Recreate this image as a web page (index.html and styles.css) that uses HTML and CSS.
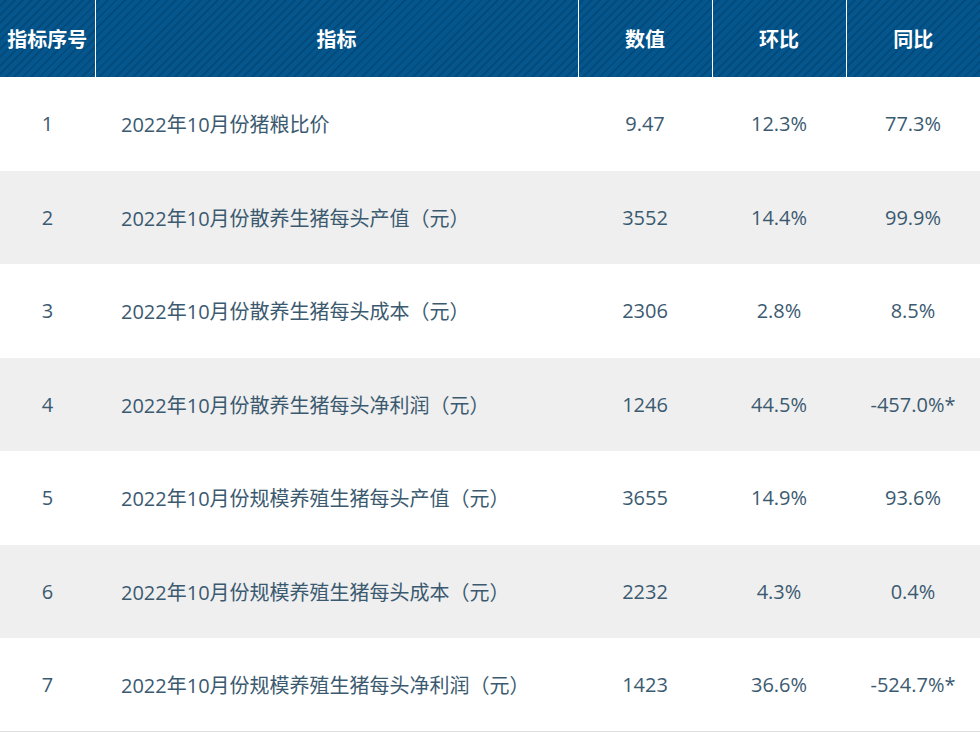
FILE: index.html
```html
<!DOCTYPE html>
<html lang="zh">
<head>
<meta charset="utf-8">
<link rel="stylesheet" href="styles.css">
</head>
<body>
<table class="data">
  <colgroup>
    <col class="c-idx"><col class="c-name"><col class="c-num"><col class="c-num"><col class="c-num">
  </colgroup>
  <thead>
    <tr><th>指标序号</th><th>指标</th><th>数值</th><th>环比</th><th>同比</th></tr>
  </thead>
  <tbody>
    <tr><td>1</td><td class="name">2022年10月份猪粮比价</td><td>9.47</td><td>12.3%</td><td>77.3%</td></tr>
    <tr><td>2</td><td class="name">2022年10月份散养生猪每头产值（元）</td><td>3552</td><td>14.4%</td><td>99.9%</td></tr>
    <tr><td>3</td><td class="name">2022年10月份散养生猪每头成本（元）</td><td>2306</td><td>2.8%</td><td>8.5%</td></tr>
    <tr><td>4</td><td class="name">2022年10月份散养生猪每头净利润（元）</td><td>1246</td><td>44.5%</td><td>-457.0%*</td></tr>
    <tr><td>5</td><td class="name">2022年10月份规模养殖生猪每头产值（元）</td><td>3655</td><td>14.9%</td><td>93.6%</td></tr>
    <tr><td>6</td><td class="name">2022年10月份规模养殖生猪每头成本（元）</td><td>2232</td><td>4.3%</td><td>0.4%</td></tr>
    <tr><td>7</td><td class="name">2022年10月份规模养殖生猪每头净利润（元）</td><td>1423</td><td>36.6%</td><td>-524.7%*</td></tr>
  </tbody>
</table>
</body>
</html>
```
FILE: styles.css
```css
html, body {
  margin: 0;
  padding: 0;
  background: #ffffff;
}
.data {
  width: 980px;
  border-collapse: collapse;
  table-layout: fixed;
  font-family: "Open Sans", "Noto Sans CJK SC", sans-serif;
}
.c-idx { width: 95px; }
.c-name { width: 483px; }
.c-num { width: 134px; }

.data thead tr {
  height: 77px;
  background-color: #04568c;
  background-image: repeating-linear-gradient(-45deg, #04568c 0px, #04568c 4px, #024b7c 4px, #024b7c 6px);
}
.data th {
  color: #ffffff;
  font-family: "Noto Sans CJK SC", sans-serif;
  font-weight: 700;
  font-size: 20px;
  text-align: center;
  padding: 0;
  border-left: 1px solid #ffffff;
}
.data th:first-child { border-left: none; }

.data tbody tr {
  height: 93.5px;
}
.data tbody tr:nth-child(even) {
  background: #efefef;
}
.data tbody tr:last-child {
  border-bottom: 1px solid #dedede;
}
.data td {
  color: #3b5a70;
  font-size: 20px;
  text-align: center;
  padding: 0;
  vertical-align: middle;
}
.data td.name {
  text-align: left;
  padding-left: 26px;
}
```
